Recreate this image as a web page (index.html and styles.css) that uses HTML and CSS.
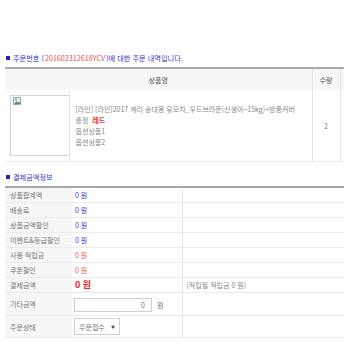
FILE: index.html
```html
<!DOCTYPE html>
<html lang="ko">
<head>
    <meta charset="UTF-8">
    <meta name="viewport" content="width=device-width, initial-scale=1.0">
    <title>주문 내역</title>
    <link rel="stylesheet" href="styles.css">
</head>
<body>
    <div class="page">
        <h2 class="section-title title-order"><span class="sq"></span>주문번호 ( <span class="order-no">201602312618YCV</span> )에 대한 주문 내역입니다.</h2>

        <table class="goods-table">
            <colgroup>
                <col class="w-img">
                <col class="w-info">
                <col class="w-qty">
                <col class="w-more">
            </colgroup>
            <tr>
                <th colspan="2">상품명</th>
                <th class="col-qty">수량</th>
                <th class="col-more"></th>
            </tr>
            <tr>
                <td class="cell-img">
                    <div class="thumb">
                        <svg width="9" height="9" viewBox="0 0 9 9">
                            <rect x="0.5" y="0.5" width="7" height="7" fill="#eef3f8" stroke="#9aa9b8"/>
                            <path d="M1 7 L3.5 4 L5 5.5 L6 4.5 L8 7 Z" fill="#4aa04a"/>
                            <circle cx="3" cy="2.5" r="1" fill="#5a8fd0"/>
                        </svg>
                    </div>
                </td>
                <td class="cell-info">
                    [라인] [라인]2017 케리 송대용 유모차_우드브라운(신생아~15kg)+방풍커버<br>
                    증정 &nbsp;<span class="opt-color">레드</span><br>
                    옵션상품1<br>
                    옵션상품2
                </td>
                <td class="cell-qty">2</td>
                <td class="cell-more"></td>
            </tr>
        </table>

        <h2 class="section-title title-pay"><span class="sq"></span>결제금액정보</h2>

        <table class="pay-table">
            <colgroup>
                <col class="w-label">
                <col class="w-val">
                <col class="w-extra">
            </colgroup>
            <tr>
                <th>상품합계액</th>
                <td class="val blue">0 원</td>
                <td class="extra"></td>
            </tr>
            <tr>
                <th>배송료</th>
                <td class="val blue">0 원</td>
                <td class="extra"></td>
            </tr>
            <tr>
                <th>상품금액할인</th>
                <td class="val blue">0 원</td>
                <td class="extra"></td>
            </tr>
            <tr>
                <th>이벤트&amp;등급할인</th>
                <td class="val blue">0 원</td>
                <td class="extra"></td>
            </tr>
            <tr>
                <th>사용 적립금</th>
                <td class="val red">0 원</td>
                <td class="extra"></td>
            </tr>
            <tr>
                <th>쿠폰할인</th>
                <td class="val red">0 원</td>
                <td class="extra"></td>
            </tr>
            <tr>
                <th>결제금액</th>
                <td class="val total">0 원</td>
                <td class="extra">(적립될 적립금 0 원)</td>
            </tr>
            <tr class="row-input">
                <th>기타금액</th>
                <td class="val"><input type="text" class="amount" value="0"><span class="unit">원</span></td>
                <td class="extra"></td>
            </tr>
            <tr class="row-select">
                <th>주문상태</th>
                <td class="val">
                    <span class="status-select"><span>주문접수</span><span class="arrow">&#9660;</span></span>
                </td>
                <td class="extra"></td>
            </tr>
        </table>
    </div>
</body>
</html>
```

FILE: styles.css
```css
html, body {
    overflow: hidden;
}

body {
    margin: 0;
    font-family: "Noto Sans CJK KR", "Noto Sans", sans-serif;
    font-size: 7px;
    color: #777;
}

.page {
    width: 400px;
    padding-left: 5px;
}

.section-title {
    margin: 0;
    height: 10px;
    line-height: 10px;
    font-size: 7.2px;
    font-weight: normal;
    color: #3434c8;
    display: flex;
    align-items: center;
}

.section-title .sq {
    display: inline-block;
    width: 4px;
    height: 4px;
    background-color: #2424b0;
    margin: 0 3px 0 1px;
}

.title-order {
    margin-top: 53px;
    margin-bottom: 4px;
}

.title-pay {
    margin-top: 10px;
    margin-bottom: 4px;
}

.order-no {
    color: #e85050;
    margin: 0 1px;
}

table {
    border-collapse: collapse;
    border-top: 2px solid #a8a8a8;
    table-layout: fixed;
}

/* 주문 상품 */
.goods-table {
    width: 395px;
}

.w-img { width: 64px; }
.w-info { width: 243px; }
.w-qty { width: 28px; }
.w-more { width: 60px; }

.goods-table th {
    height: 21px;
    padding: 0;
    background-color: #f6f6f6;
    font-weight: normal;
    color: #555;
}

.goods-table td {
    border-bottom: 1px solid #ececec;
    padding: 0;
}

.col-qty,
.cell-qty {
    border-left: 1px solid #e6e6e6;
    text-align: center;
}

.col-more,
.cell-more {
    border-left: 1px solid #e6e6e6;
}

.goods-table .cell-img {
    padding: 5px 1px 5px 5px;
    border-right: 1px solid #e6e6e6;
}

.thumb {
    width: 56px;
    height: 58px;
    border: 1px solid #d4d4d4;
    padding: 1px 0 0 2px;
    box-sizing: content-box;
}

.thumb svg {
    display: block;
}

.goods-table .cell-info {
    padding-left: 6px;
    line-height: 11px;
    color: #888;
}

.opt-color {
    color: #ee3333;
    font-weight: bold;
}

.cell-qty {
    color: #777;
}

/* 결제 금액 */
.pay-table {
    width: 395px;
}

.w-label { width: 67px; }
.w-val { width: 110px; }

.pay-table th,
.pay-table td {
    height: 14px;
    padding: 0;
    border-bottom: 1px solid #ececec;
    line-height: 14px;
}

.pay-table th {
    padding-left: 5px;
    background-color: #f6f6f6;
    text-align: left;
    font-weight: normal;
    color: #777;
}

.pay-table .val {
    padding-left: 3px;
}

.pay-table .extra {
    border-left: 1px solid #e6e6e6;
    padding-left: 4px;
    color: #888;
}

.blue {
    color: #3a3ad0;
}

.red {
    color: #f05a5a;
}

.total {
    color: #ee2020;
    font-weight: bold;
    font-size: 9px;
}

.row-input th,
.row-input td {
    height: 22px;
}

.row-select th,
.row-select td {
    height: 21px;
}

.amount {
    width: 78px;
    height: 14px;
    box-sizing: border-box;
    margin: 0 0 0 -1px;
    padding: 0 6px 0 0;
    border: 1px solid #d0d0d0;
    font-family: inherit;
    font-size: 7px;
    color: #777;
    text-align: right;
    vertical-align: middle;
}

.unit {
    margin-left: 5px;
    vertical-align: middle;
}

.status-select {
    display: inline-flex;
    align-items: center;
    justify-content: space-between;
    width: 46px;
    height: 17px;
    box-sizing: border-box;
    margin-left: -1px;
    padding: 0 4px 0 4px;
    border: 1px solid #d0d0d0;
    vertical-align: middle;
    color: #777;
}

.status-select .arrow {
    font-size: 4px;
    color: #444;
}
```
